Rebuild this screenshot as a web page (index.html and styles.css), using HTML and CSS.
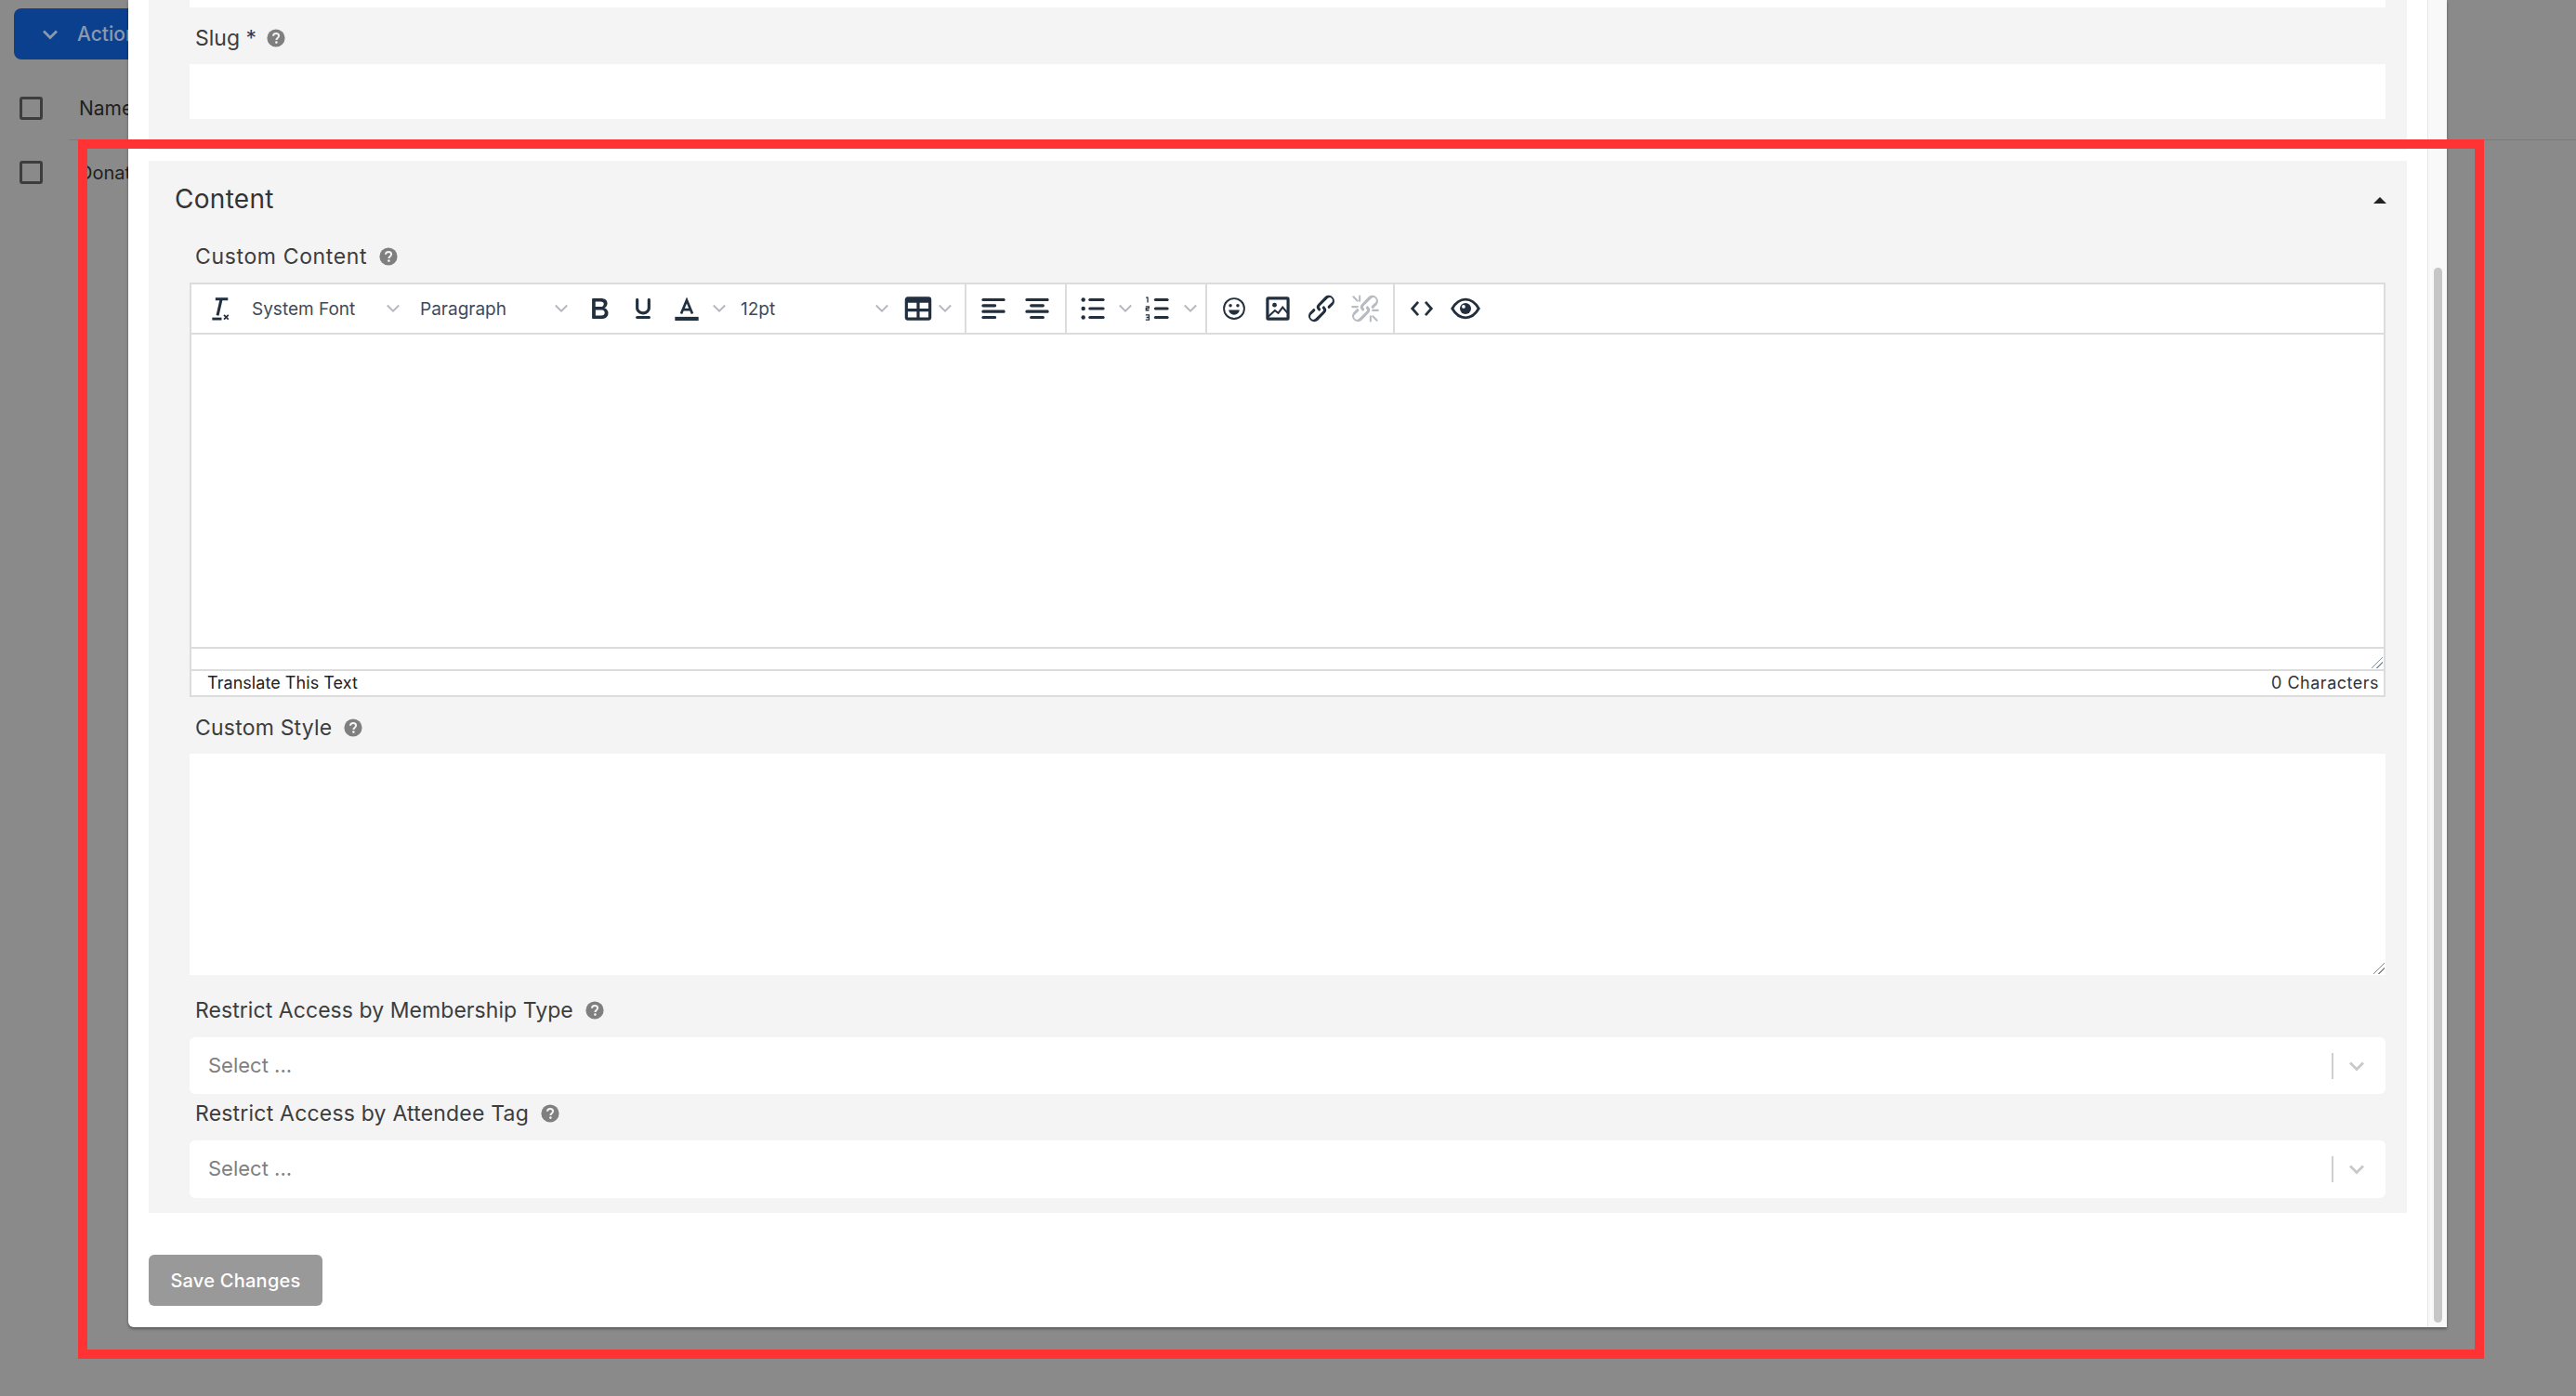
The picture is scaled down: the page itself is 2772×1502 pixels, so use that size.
FILE: index.html
```html
<!DOCTYPE html>
<html lang="en">
<head>
<meta charset="utf-8">
<title>Edit page</title>
<link rel="stylesheet" href="styles.css">
</head>
<body>
<svg class="defs" aria-hidden="true">
  <symbol id="chev" viewBox="0 0 14 14"><path d="M.8 3.500 7 9.700l6.200-6.200" fill="none" stroke="currentColor" stroke-width="1.800"/></symbol>
  <symbol id="help" viewBox="0 0 20 20"><circle cx="10" cy="10" r="9.600" fill="#7f7f7f"/><path d="M7 7.800c0-1.700 1.300-2.800 3.100-2.800 1.800 0 3 1 3 2.600 0 2.300-2.700 2.300-2.700 4.300" fill="none" stroke="#f4f4f4" stroke-width="2"/><circle cx="10.400" cy="14.600" r="1.300" fill="#f4f4f4"/></symbol>
</svg>

<main class="page">
  <div class="page-actions">
    <div class="actions-btn">
      <svg class="actions-chev" viewBox="0 0 18 12"><path d="M2 2.500 9 9.500l7-7" fill="none" stroke="currentColor" stroke-width="2.800"/></svg>
      <span>Actions</span>
    </div>
  </div>
  <div class="row row-head"><span class="check"></span><span class="cell">Name</span></div>
  <div class="row"><span class="check"></span><span class="cell cell-sm">Donation</span></div>
</main>

<section class="modal">
  <div class="modal-body">
    <div class="panel panel-top">
      <div class="input input-stub"></div>
      <div class="label label-slug">Slug *<svg class="help"><use href="#help"/></svg></div>
      <div class="input input-slug"></div>
    </div>

    <div class="panel panel-content">
      <div class="panel-head">
        <h2 class="panel-title">Content</h2>
        <span class="caret"></span>
      </div>

      <div class="label label-custom">Custom Content<svg class="help"><use href="#help"/></svg></div>
      <div class="editor">
        <div class="toolbar">
          <div class="tb-group tb-first">
            <span class="tool tool-lead"><svg viewBox="0 0 24 24"><path d="M10 5.500h8.500M14 5.500l-2.600 11.200" fill="none" stroke="#222f3e" stroke-width="1.900"/><path d="M7.800 19h6.400" stroke="#222f3e" stroke-width="1.800"/><path d="M15.800 16.300l3 3M18.800 16.300l-3 3" stroke="#222f3e" stroke-width="1.100"/></svg></span>
            <span class="tb-select tb-font"><span>System Font</span><svg class="tb-chev"><use href="#chev"/></svg></span>
            <span class="tb-select tb-block"><span>Paragraph</span><svg class="tb-chev"><use href="#chev"/></svg></span>
            <span class="tool"><svg viewBox="0 0 24 24"><path fill="#222f3e" d="M7.800 19c-.3 0-.5 0-.6-.2l-.2-.5V5.700c0-.2 0-.4.2-.5l.6-.2h5c1.500 0 2.700.3 3.500 1 .7.600 1.100 1.400 1.100 2.500a3 3 0 0 1-.6 1.900c-.4.600-1 1-1.600 1.200.4.100.9.300 1.300.6s.8.700 1 1.200c.4.400.5 1 .5 1.600 0 1.300-.4 2.300-1.300 3-.8.700-2.100 1-3.800 1H7.800Zm5-8.300c.6 0 1.200-.1 1.600-.5.4-.3.6-.7.6-1.300 0-1.100-.8-1.700-2.300-1.700H9.300v3.500h3.400Zm.5 6c.7 0 1.300-.1 1.700-.4.4-.4.6-.9.6-1.500s-.2-1-.7-1.400c-.4-.3-1-.4-2-.4H9.400v3.800h4Z"/></svg></span>
            <span class="tool"><svg viewBox="0 0 24 24"><path fill="#222f3e" d="M16 5c.6 0 1 .4 1 1v5.500a4 4 0 0 1-.4 1.800l-1 1.400a5.300 5.300 0 0 1-5.500 1 5 5 0 0 1-1.600-1c-.5-.4-.8-.9-1.100-1.400a4 4 0 0 1-.4-1.800V6c0-.6.4-1 1-1s1 .4 1 1v5.500c0 .3 0 .6.2 1l.6.700a3.300 3.300 0 0 0 2.200.8 3.400 3.400 0 0 0 2.200-.8c.3-.2.4-.5.600-.8l.2-.9V6c0-.6.4-1 1-1ZM8 17h8c.6 0 1 .4 1 1s-.4 1-1 1H8a1 1 0 0 1 0-2Z"/></svg></span>
            <span class="tool"><svg viewBox="0 0 24 24"><path d="M8.200 15.500 12 6.300l3.800 9.200M9.500 12.700h5" fill="none" stroke="#222f3e" stroke-width="1.700"/><rect x="4" y="17.600" width="16" height="2.600" fill="#222f3e"/></svg></span>
            <svg class="tool-chev"><use href="#chev"/></svg>
            <span class="tb-select tb-size"><span>12pt</span><svg class="tb-chev"><use href="#chev"/></svg></span>
            <span class="tool tool-table"><svg viewBox="0 0 24 24"><path fill="#222f3e" d="M19 4a2 2 0 0 1 2 2v12a2 2 0 0 1-2 2H5a2 2 0 0 1-2-2V6c0-1.100.9-2 2-2h14ZM5 14v4h6v-4H5Zm14 0h-6v4h6v-4Zm0-6h-6v4h6V8ZM5 12h6V8H5v4Z"/></svg></span>
            <svg class="tool-chev tool-chev-near"><use href="#chev"/></svg>
          </div>
          <div class="tb-group tb-align">
            <span class="tool"><svg viewBox="0 0 24 24"><path fill="#222f3e" d="M5 5h14c.6 0 1 .4 1 1s-.4 1-1 1H5a1 1 0 1 1 0-2Zm0 4h8c.6 0 1 .4 1 1s-.4 1-1 1H5a1 1 0 1 1 0-2Zm0 8h8c.6 0 1 .4 1 1s-.4 1-1 1H5a1 1 0 0 1 0-2Zm0-4h14c.6 0 1 .4 1 1s-.4 1-1 1H5a1 1 0 0 1 0-2Z"/></svg></span>
            <span class="tool"><svg viewBox="0 0 24 24"><path fill="#222f3e" d="M5 5h14c.6 0 1 .4 1 1s-.4 1-1 1H5a1 1 0 1 1 0-2Zm3 4h8c.6 0 1 .4 1 1s-.4 1-1 1H8a1 1 0 1 1 0-2Zm0 8h8c.6 0 1 .4 1 1s-.4 1-1 1H8a1 1 0 0 1 0-2Zm-3-4h14c.6 0 1 .4 1 1s-.4 1-1 1H5a1 1 0 0 1 0-2Z"/></svg></span>
          </div>
          <div class="tb-group tb-lists">
            <span class="tool"><svg viewBox="0 0 24 24"><g fill="#222f3e"><circle cx="5.500" cy="6" r="1.400"/><circle cx="5.500" cy="12" r="1.400"/><circle cx="5.500" cy="18" r="1.400"/><rect x="9" y="5" width="11" height="2" rx="1"/><rect x="9" y="11" width="11" height="2" rx="1"/><rect x="9" y="17" width="11" height="2" rx="1"/></g></svg></span>
            <svg class="tool-chev"><use href="#chev"/></svg>
            <span class="tool tool-numlist"><svg viewBox="0 0 24 24"><g fill="#222f3e"><rect x="10" y="5" width="10" height="2" rx="1"/><rect x="10" y="11" width="10" height="2" rx="1"/><rect x="10" y="17" width="10" height="2" rx="1"/></g><path d="M4.500 4.500h1.200v3.400M4.300 10.600h2.200v1.200H4.600v1.300h2M4.300 16.400h2.300v3.200H4.300M4.800 18h1.700" fill="none" stroke="#222f3e" stroke-width=".8"/></svg></span>
            <svg class="tool-chev"><use href="#chev"/></svg>
          </div>
          <div class="tb-group tb-insert">
            <span class="tool"><svg viewBox="0 0 24 24"><circle cx="12" cy="12" r="6.900" fill="none" stroke="#222f3e" stroke-width="1.200"/><circle cx="9.500" cy="10" r="1.100" fill="#222f3e"/><circle cx="14.500" cy="10" r="1.100" fill="#222f3e"/><path d="M8.300 13h7.400c-.3 2-1.800 3.200-3.700 3.200S8.600 15 8.300 13Z" fill="#222f3e"/></svg></span>
            <span class="tool"><svg viewBox="0 0 24 24"><rect x="5" y="5" width="14" height="14" rx=".6" fill="none" stroke="#222f3e" stroke-width="2"/><circle cx="9.800" cy="9.600" r="1.500" fill="#222f3e"/><path d="M5.500 17.500l4.500-4.200 2.300 1.800 3-4 3.300 3.800" fill="none" stroke="#222f3e" stroke-width="1.300"/></svg></span>
            <span class="tool"><svg viewBox="0 0 24 24"><path fill="#222f3e" d="M6.200 12.300a1 1 0 0 1 1.400 1.400l-2 2a2 2 0 1 0 2.600 2.800l4.800-4.800a1 1 0 0 0 0-1.400 1 1 0 1 1 1.400-1.300 2.900 2.900 0 0 1 0 4L9.600 20a3.900 3.900 0 0 1-5.500-5.500l2-2Zm11.600-.6a1 1 0 0 1-1.400-1.400l2-2a2 2 0 1 0-2.600-2.800L11 10.300a1 1 0 0 0 0 1.400A1 1 0 1 1 9.600 13a2.900 2.900 0 0 1 0-4L14.400 4a3.900 3.900 0 0 1 5.500 5.500l-2 2Z"/></svg></span>
            <span class="tool"><svg viewBox="0 0 24 24"><path fill="#b8bcc2" d="M6.200 12.300a1 1 0 0 1 1.400 1.400l-2 2a2 2 0 1 0 2.600 2.800l4.800-4.800a1 1 0 0 0 0-1.400 1 1 0 1 1 1.400-1.300 2.900 2.900 0 0 1 0 4L9.600 20a3.900 3.900 0 0 1-5.500-5.500l2-2Zm11.600-.6a1 1 0 0 1-1.400-1.400l2-2a2 2 0 1 0-2.600-2.800L11 10.300a1 1 0 0 0 0 1.400A1 1 0 1 1 9.600 13a2.900 2.900 0 0 1 0-4L14.400 4a3.900 3.900 0 0 1 5.500 5.500l-2 2Z"/><path d="M4 4l2.800 2.800M8.300 3.500v3.300M3.300 10.800h3.500M20 20l-2.800-2.800M15.700 20.500v-3.300M20.700 13.200h-3.500" stroke="#b8bcc2" stroke-width="1.300" stroke-linecap="round"/></svg></span>
          </div>
          <div class="tb-group tb-view">
            <span class="tool"><svg viewBox="0 0 24 24"><path d="M9.500 7.500 5.500 12l4 4.500M14.500 7.500l4 4.500-4 4.500" fill="none" stroke="#222f3e" stroke-width="1.700"/></svg></span>
            <span class="tool"><svg viewBox="0 0 24 24"><path d="M3 12c2.500-4.300 5.700-6.200 9-6.200s6.500 1.900 9 6.200c-2.500 4.300-5.700 6.200-9 6.200S5.500 16.300 3 12Z" fill="none" stroke="#222f3e" stroke-width="1.800"/><circle cx="12" cy="12" r="3.800" fill="#222f3e"/><circle cx="10.700" cy="10.700" r="1.200" fill="#fff"/></svg></span>
          </div>
        </div>
        <div class="edit-area"></div>
        <div class="edit-strip"><span class="grip"></span></div>
        <div class="statusbar"><span class="translate">Translate This Text</span><span class="count">0 Characters</span></div>
      </div>

      <div class="label label-style">Custom Style<svg class="help"><use href="#help"/></svg></div>
      <div class="textarea"><span class="grip grip-area"></span></div>

      <div class="label label-type">Restrict Access by Membership Type<svg class="help"><use href="#help"/></svg></div>
      <div class="select"><span class="placeholder">Select ...</span><span class="sel-sep"></span><svg class="sel-chev" viewBox="0 0 18 12"><path d="M2 2.500l7 7 7-7" fill="none" stroke="currentColor" stroke-width="2.800"/></svg></div>

      <div class="label label-tag">Restrict Access by Attendee Tag<svg class="help"><use href="#help"/></svg></div>
      <div class="select select-last"><span class="placeholder">Select ...</span><span class="sel-sep"></span><svg class="sel-chev" viewBox="0 0 18 12"><path d="M2 2.500l7 7 7-7" fill="none" stroke="currentColor" stroke-width="2.800"/></svg></div>
    </div>

    <button class="save" type="button">Save Changes</button>
  </div>
  <div class="scrolltrack"><div class="scrollthumb"></div></div>
</section>

<div class="annotation"></div>
</body>
</html>
```
FILE: styles.css
```css
* { box-sizing: border-box; }
html, body { margin: 0; height: 100%; }
body {
  position: relative;
  height: 1502px;
  overflow: hidden;
  background: #8a8a8a;
  font-family: Inter, "Liberation Sans", sans-serif;
  color: #3a3a3a;
}
.defs { position: absolute; width: 0; height: 0; }

/* dimmed page behind the dialog */
.page { padding-top: 9px; }
.page-actions { padding-left: 15px; }
.actions-btn {
  display: flex;
  align-items: center;
  width: 240px;
  height: 55px;
  padding-left: 30px;
  border-radius: 8px;
  background: #0b408f;
  color: #8a99ae;
  font-size: 21px;
  font-weight: 500;
}
.actions-chev { width: 18px; height: 12px; margin-right: 20px; }
.row { display: flex; align-items: center; height: 69px; padding-left: 21px; }
.row-head { margin-top: 18px; position: relative; }
.row-head::after {
  content: "";
  position: absolute;
  left: 74px;
  right: 0;
  bottom: 0;
  height: 1px;
  background: #7b7b7b;
}
.check {
  width: 25px;
  height: 25px;
  border: 3px solid #3d3d3d;
  border-radius: 3px;
}
.cell { margin-left: 39px; font-size: 21px; color: #1f1f1f; }
.cell-sm { font-size: 20px; }

/* dialog */
.modal {
  position: absolute;
  left: 138px;
  top: 0;
  width: 2495px;
  height: 1428px;
  display: flex;
  background: #fff;
  border-radius: 0 0 0 6px;
  box-shadow: 0 2px 3px rgba(0, 0, 0, .35);
}
.modal-body { flex: 1; padding-left: 22px; overflow: hidden; }
.scrolltrack {
  width: 21px;
  padding: 288px 5px 5px 6px;
  background: #f9f9f9;
  border-left: 1px solid #e6e6e6;
}
.scrollthumb { height: 100%; border-radius: 6px; background: #c6c6c6; }

.panel { width: 2430px; padding: 0 23px 0 44px; background: #f4f4f4; }
.panel-top { height: 161px; }
.panel-content { margin-top: 12px; height: 1132px; }

.input { background: #fff; }
.input-stub { height: 8px; }
.input-slug { height: 59px; }

.panel-head {
  display: flex;
  align-items: center;
  justify-content: space-between;
  height: 80px;
  margin-bottom: 3px;
  margin-left: -16px;
}
.panel-title { margin: 0; padding-top: 2px; font-size: 28px; font-weight: 400; letter-spacing: .3px; color: #333; }
.caret {
  width: 0;
  height: 0;
  margin-right: -1px;
  margin-top: 4px;
  border: 7px solid transparent;
  border-top: 0;
  border-bottom: 7px solid #222;
}

.label {
  display: flex;
  align-items: center;
  height: 40px;
  margin-bottom: 8px;
  padding-left: 6px;
  font-size: 23px;
  letter-spacing: .2px;
  color: #3d3d3d;
}
.label-slug { margin-top: 13px; letter-spacing: 0; }
.label-slug .help { margin-left: 11px; }
.label-custom { letter-spacing: .64px; }
.label-style { margin-top: 13px; }
.label-type { margin-top: 18px; margin-bottom: 9px; letter-spacing: .06px; }
.label-tag { margin-top: 1px; margin-bottom: 9px; }
.help { width: 20px; height: 20px; margin-left: 13px; flex: none; }

/* rich text editor */
.editor { height: 446px; display: flex; flex-direction: column; border: 2px solid #dcdcdc; background: #fff; }
.toolbar { display: flex; height: 54px; flex: none; border-bottom: 2px solid #dcdcdc; }
.tb-group { display: flex; align-items: center; height: 100%; border-right: 2px solid #dcdcdc; padding-left: 1px; }
.tb-first { width: 834px; }
.tb-align { width: 108px; }
.tb-lists { width: 151px; padding-left: 0; }
.tb-insert { width: 202px; }
.tb-view { border-right: 0; }
.tool { display: block; flex: none; width: 38px; height: 38px; margin-left: 9px; }
.tool-lead { margin-right: 10px; }
.tool svg { display: block; width: 38px; height: 38px; }
.tool-table { margin-left: 7px; }
.tool-numlist { margin-left: 8px; margin-right: 1px; }
.tool-chev { flex: none; width: 14px; height: 14px; margin-left: 9px; color: #b3b7bd; }
.tool-chev-near { margin-left: 3px; }
.tb-select {
  display: flex;
  align-items: center;
  justify-content: space-between;
  flex: none;
  height: 38px;
  padding-right: 6px;
  font-size: 19px;
  color: #3f4a59;
}
.tb-chev { width: 14px; height: 14px; color: #b3b7bd; }
.tb-font { width: 172px; padding-left: 7px; }
.tb-block { width: 181px; padding-left: 16px; }
.tb-size { width: 181px; padding-left: 16px; }

.edit-area { height: 338px; flex: none; border-bottom: 2px solid #dcdcdc; }
.edit-strip { position: relative; height: 24px; flex: none; border-bottom: 2px solid #dcdcdc; }
.statusbar {
  flex: 1;
  display: flex;
  align-items: center;
  justify-content: space-between;
  padding: 0 5px 2px 17px;
  font-size: 18px;
  color: #333;
}
.translate { color: #222; letter-spacing: .05px; }
.count { letter-spacing: .5px; }
.grip {
  position: absolute;
  right: 1px;
  bottom: 1px;
  width: 12px;
  height: 12px;
  background: linear-gradient(135deg, transparent 46%, #8c93a0 46%, #8c93a0 54%, transparent 54%, transparent 70%, #8c93a0 70%, #8c93a0 78%, transparent 78%);
}

.textarea { position: relative; height: 238px; background: #fff; }
.grip-area { background: linear-gradient(135deg, transparent 46%, #8a8a8a 46%, #8a8a8a 54%, transparent 54%, transparent 70%, #8a8a8a 70%, #8a8a8a 78%, transparent 78%); }

.select {
  display: flex;
  align-items: center;
  height: 61px;
  padding: 0 22px 0 20px;
  border-radius: 6px;
  background: #fff;
}
.select-last { height: 62px; }
.placeholder { flex: 1; padding-bottom: 2px; font-size: 22px; color: #808080; }
.sel-sep { width: 2px; height: 28px; margin-right: 16px; background: #cfcfcf; }
.sel-chev { width: 18px; height: 12px; color: #c9c9c9; }

.save {
  display: block;
  width: 187px;
  height: 55px;
  margin-top: 45px;
  padding: 0;
  border: 0;
  border-radius: 6px;
  background: #999;
  color: #fff;
  font-family: inherit;
  font-size: 20px;
  font-weight: 500;
  letter-spacing: .25px;
}

/* red annotation drawn over the screenshot */
.annotation {
  position: absolute;
  left: 84px;
  top: 150px;
  width: 2589px;
  height: 1312px;
  border: 10px solid #ff3333;
  pointer-events: none;
}
```
